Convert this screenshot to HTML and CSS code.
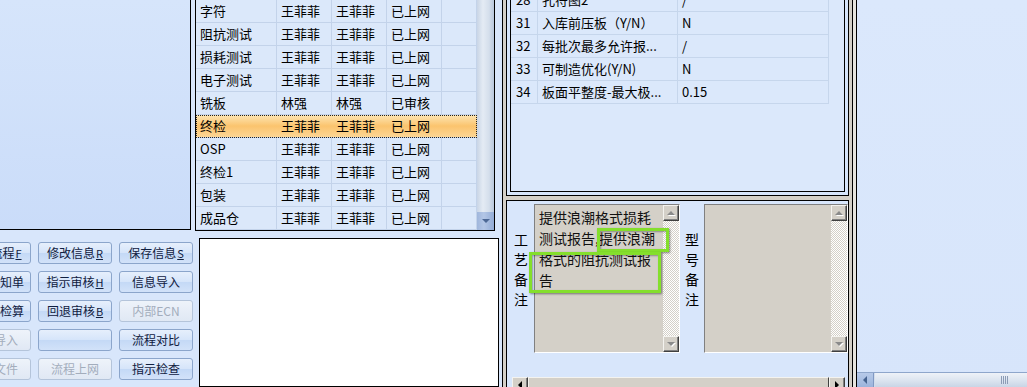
FILE: index.html
```html
<!DOCTYPE html>
<html lang="zh-CN">
<head>
  <meta charset="UTF-8">
  <meta name="viewport" content="width=device-width, initial-scale=1.0">
  <title>工程指示</title>
  <link rel="stylesheet" href="styles.css">
</head>
<body>
<div class="screen">

  <div class="left">
    <div class="tree-panel"></div>
    <div class="btn-grid">
      <button class="btn">查看流程<u>F</u></button>
      <button class="btn">修改信息<u>R</u></button>
      <button class="btn">保存信息<u>S</u></button>
      <button class="btn">生产通知单</button>
      <button class="btn">指示审核<u>H</u></button>
      <button class="btn">信息导入</button>
      <button class="btn">阻抗线检算</button>
      <button class="btn">回退审核<u>B</u></button>
      <button class="btn" disabled>内部ECN</button>
      <button class="btn" disabled>资料导入</button>
      <button class="btn"></button>
      <button class="btn">流程对比</button>
      <button class="btn" disabled>打开文件</button>
      <button class="btn" disabled>流程上网</button>
      <button class="btn">指示检查</button>
    </div>
  </div>

  <div class="middle">
    <div class="flow-box">
      <div class="flow">
        <div class="flow-row"><span>字符</span><span>王菲菲</span><span>王菲菲</span><span>已上网</span><span></span></div>
        <div class="flow-row"><span>阻抗测试</span><span>王菲菲</span><span>王菲菲</span><span>已上网</span><span></span></div>
        <div class="flow-row"><span>损耗测试</span><span>王菲菲</span><span>王菲菲</span><span>已上网</span><span></span></div>
        <div class="flow-row"><span>电子测试</span><span>王菲菲</span><span>王菲菲</span><span>已上网</span><span></span></div>
        <div class="flow-row"><span>铣板</span><span>林强</span><span>林强</span><span>已审核</span><span></span></div>
        <div class="flow-row selected"><span>终检</span><span>王菲菲</span><span>王菲菲</span><span>已上网</span><span></span></div>
        <div class="flow-row"><span>OSP</span><span>王菲菲</span><span>王菲菲</span><span>已上网</span><span></span></div>
        <div class="flow-row"><span>终检1</span><span>王菲菲</span><span>王菲菲</span><span>已上网</span><span></span></div>
        <div class="flow-row"><span>包装</span><span>王菲菲</span><span>王菲菲</span><span>已上网</span><span></span></div>
        <div class="flow-row"><span>成品仓</span><span>王菲菲</span><span>王菲菲</span><span>已上网</span><span></span></div>
      </div>
      <div class="vscroll">
        <div class="vthumb"></div>
        <div class="vbtn"></div>
      </div>
    </div>
    <div class="memo"></div>
  </div>

  <div class="vsplit"></div>

  <div class="right">
    <div class="props-box">
      <div class="props-inner">
        <div class="props">
          <div class="props-row"><span>28</span><span>孔符图2</span><span>/</span></div>
          <div class="props-row"><span>31</span><span>入库前压板（Y/N）</span><span>N</span></div>
          <div class="props-row"><span>32</span><span>每批次最多允许报...</span><span>/</span></div>
          <div class="props-row"><span>33</span><span>可制造优化(Y/N)</span><span>N</span></div>
          <div class="props-row"><span>34</span><span>板面平整度-最大极...</span><span>0.15</span></div>
        </div>
      </div>
    </div>
    <div class="hgap"></div>
    <div class="notes">
      <div class="notes-body">
        <div class="side-label">工艺备注</div>
        <div class="field field-craft">
          <div class="field-text">提供浪潮格式损耗<br>测试报告,提供浪潮<br>格式的阻抗测试报<br>告</div>
          <div class="field-scroll"><div class="arr arr-up"></div><div class="arr arr-down"></div></div>
        </div>
        <div class="side-label side-label-2">型号备注</div>
        <div class="field field-model">
          <div class="field-text"></div>
          <div class="field-scroll"><div class="arr arr-up"></div><div class="arr arr-down"></div></div>
        </div>
      </div>
      <div class="hscroll">
        <div class="arr arr-left"></div>
        <div class="hthumb"></div>
        <div class="arr arr-right"></div>
      </div>
      <div class="mark mark-1"></div>
      <div class="mark mark-2"></div>
    </div>
  </div>

  <div class="vsplit-2"></div>

  <div class="far">
    <div class="far-scroll">
      <div class="far-btn"></div>
      <div class="far-track"><div class="far-thumb"><i></i><i></i><i></i><i></i></div></div>
    </div>
  </div>

</div>
</body>
</html>
```

FILE: styles.css
```css
* {
  box-sizing: border-box;
}
html, body {
  margin: 0;
}
body {
  width: 1027px;
  height: 387px;
  overflow: hidden;
  background: #d8e6fb;
  font-family: "Noto Sans CJK SC", "Liberation Sans", sans-serif;
  font-size: 13px;
  color: #000;
}
.screen {
  display: flex;
  height: 387px;
}

/* left column */
.left {
  width: 195px;
  flex: none;
}
.tree-panel {
  width: 191px;
  height: 230px;
  border-right: 1px solid #000;
  border-bottom: 1px solid #000;
  background: linear-gradient(#d6e5fb, #cadcf9);
}
.btn-grid {
  display: grid;
  grid-template-columns: repeat(3, 74px);
  grid-auto-rows: 22px;
  gap: 7px 7px;
  margin: 12px 0 0 -43px;
}
.btn {
  font-family: "Noto Sans CJK SC", sans-serif;
  font-size: 12px;
  line-height: 20px;
  color: #102040;
  padding: 0;
  white-space: nowrap;
  overflow: hidden;
  border: 1px solid #8ba5cb;
  border-radius: 3px;
  background: linear-gradient(#e6effc, #d6e5fa 48%, #c4d9f6 52%, #d2e2f9);
}
.btn u {
  font-size: 11px;
  margin-left: 1px;
}
.btn:disabled {
  color: #a3adbc;
  border-color: #b4c4da;
  background: linear-gradient(#eef3fa, #e0e8f4);
}

/* middle column */
.middle {
  width: 307px;
  flex: none;
  display: flex;
  flex-direction: column;
}
.flow-box {
  display: flex;
  width: 300px;
  height: 231px;
  border: 1px solid #000;
  border-top: 0;
  background: #dbe8fa;
}
.flow {
  width: 281px;
}
.flow-row {
  display: grid;
  grid-template-columns: 81px 55px 55px 55px 35px;
  height: 23px;
  border-bottom: 1px solid #c3d3ea;
}
.flow-row span {
  padding-left: 4px;
  line-height: 22px;
  border-right: 1px solid #c3d3ea;
  white-space: nowrap;
}
.flow-row.selected {
  background: linear-gradient(#fde6b4, #fbc46e 50%, #fcd594);
  outline: 1px dotted #222;
  outline-offset: -1px;
}
.flow-row.selected span {
  border-right-color: transparent;
}
.vscroll {
  width: 17px;
  display: flex;
  flex-direction: column;
}
.vthumb {
  flex: 1;
  background: linear-gradient(to right, #c9d5e6, #e4ebf4 35%, #d5dfec 70%, #b9c8dd);
}
.vbtn {
  height: 18px;
  background: linear-gradient(to right, #9fb6dc, #b3c6e6 40%, #93acd6);
  display: flex;
  align-items: center;
  justify-content: center;
}
.vbtn::after {
  content: "";
  border-left: 4px solid transparent;
  border-right: 4px solid transparent;
  border-top: 4px solid #4d6895;
}
.memo {
  flex: 1;
  width: 300px;
  margin: 7px 0 0 4px;
  border: 1px solid #000;
  background: #fff;
}

.vsplit {
  width: 4px;
  flex: none;
  border-left: 1px solid #000;
  background: #d4d0c8;
}

/* right column */
.right {
  width: 343px;
  flex: none;
  display: flex;
  flex-direction: column;
}
.props-box {
  height: 196px;
  flex: none;
  border: 1px solid #000;
  border-top: 0;
  padding: 0 3px 3px;
  background: #d6e5fb;
}
.props-inner {
  height: 100%;
  border: 1px solid #000;
  border-top: 0;
  background: #dbe8fb;
  overflow: hidden;
}
.props {
  margin-top: -11px;
  width: 318px;
}
.props-row {
  display: grid;
  grid-template-columns: 27px 140px 151px;
  height: 23px;
  border-bottom: 1px solid #c6d6ec;
}
.props-row span {
  padding-left: 4px;
  line-height: 22px;
  border-right: 1px solid #c6d6ec;
  white-space: nowrap;
}
.props-row span:first-child {
  padding-left: 5px;
}
.hgap {
  height: 4px;
  flex: none;
  background: #d4d0c8;
}
.notes {
  position: relative;
  height: 194px;
  flex: none;
  display: flex;
  flex-direction: column;
  border: 1px solid #000;
  border-bottom: 0;
  background: #d8e6fb;
  overflow: hidden;
}
.notes-body {
  display: flex;
  align-items: flex-start;
  padding: 3px 0 0 7px;
}
.side-label {
  width: 14px;
  flex: none;
  padding-top: 25px;
  font-size: 14px;
  line-height: 20px;
}
.side-label-2 {
  margin-left: 5px;
}
.field {
  display: flex;
  flex: none;
  height: 149px;
  border: 1px solid;
  border-color: #808080 #fff #fff #808080;
  background: #d4d0c8;
}
.field-craft {
  width: 146px;
  margin-left: 6px;
}
.field-model {
  width: 144px;
  margin-left: 5px;
}
.field-text {
  flex: 1;
  padding: 2px 0 0 4px;
  font-size: 14px;
  line-height: 21px;
  white-space: nowrap;
  color: #111;
}
.field-scroll {
  width: 16px;
  display: flex;
  flex-direction: column;
  justify-content: space-between;
  background: repeating-conic-gradient(#fff 0 25%, #d4d0c8 0 50%) 0 0 / 2px 2px;
}
.arr {
  width: 16px;
  height: 16px;
  flex: none;
  display: flex;
  align-items: center;
  justify-content: center;
  background: #d4d0c8;
  border: 1px solid;
  border-color: #f4f3ef #404040 #404040 #f4f3ef;
  box-shadow: inset -1px -1px #808080;
}
.arr::after {
  content: "";
}
.arr-up::after {
  border-left: 4px solid transparent;
  border-right: 4px solid transparent;
  border-bottom: 4px solid #8a8a8a;
  filter: drop-shadow(1px 1px 0 #fff);
}
.arr-down::after {
  border-left: 4px solid transparent;
  border-right: 4px solid transparent;
  border-top: 4px solid #8a8a8a;
  filter: drop-shadow(1px 1px 0 #fff);
}
.arr-left::after {
  border-top: 4px solid transparent;
  border-bottom: 4px solid transparent;
  border-right: 4px solid #000;
}
.arr-right::after {
  border-top: 4px solid transparent;
  border-bottom: 4px solid transparent;
  border-left: 4px solid #000;
}
.hscroll {
  display: flex;
  height: 17px;
  margin: auto 3px 0 5px;
  background: repeating-conic-gradient(#fff 0 25%, #d4d0c8 0 50%) 0 0 / 2px 2px;
}
.hthumb {
  flex: 1;
  background: #d4d0c8;
  border: 1px solid;
  border-color: #f4f3ef #404040 #404040 #f4f3ef;
}
.mark {
  position: absolute;
  border: 3px solid #84df2c;
  box-shadow: 1px 1px 2px rgba(0, 0, 0, 0.45), inset 1px 1px 2px rgba(0, 0, 0, 0.35);
}
.mark-1 {
  left: 90px;
  top: 27px;
  width: 72px;
  height: 24px;
}
.mark-2 {
  left: 22px;
  top: 51px;
  width: 132px;
  height: 41px;
}

.vsplit-2 {
  width: 8px;
  flex: none;
  background: linear-gradient(to right, #d4d0c8 0 3px, #000 3px 4px, #e6e4de 4px 7px, #000 7px 8px);
}

/* far right */
.far {
  flex: 1;
  display: flex;
  flex-direction: column;
  background: linear-gradient(#dbe8fc, #d7e5fb);
}
.far-scroll {
  display: flex;
  height: 15px;
  margin-top: auto;
  border-top: 1px solid #8ea6cb;
}
.far-btn {
  width: 17px;
  display: flex;
  align-items: center;
  justify-content: center;
  background: linear-gradient(#b7cae9, #9cb4dc);
  border-right: 1px solid #8199c3;
}
.far-btn::after {
  content: "";
  border-top: 4px solid transparent;
  border-bottom: 4px solid transparent;
  border-right: 4px solid #45628f;
}
.far-track {
  flex: 1;
  overflow: hidden;
  background: #d2ddec;
}
.far-thumb {
  display: flex;
  justify-content: center;
  align-items: center;
  gap: 1px;
  width: 258px;
  height: 100%;
  margin-left: 1px;
  background: linear-gradient(#eef2f8, #dde5f0 50%, #c9d5e6);
}
.far-thumb i {
  width: 1px;
  height: 8px;
  background: #8b9bb5;
}
```
